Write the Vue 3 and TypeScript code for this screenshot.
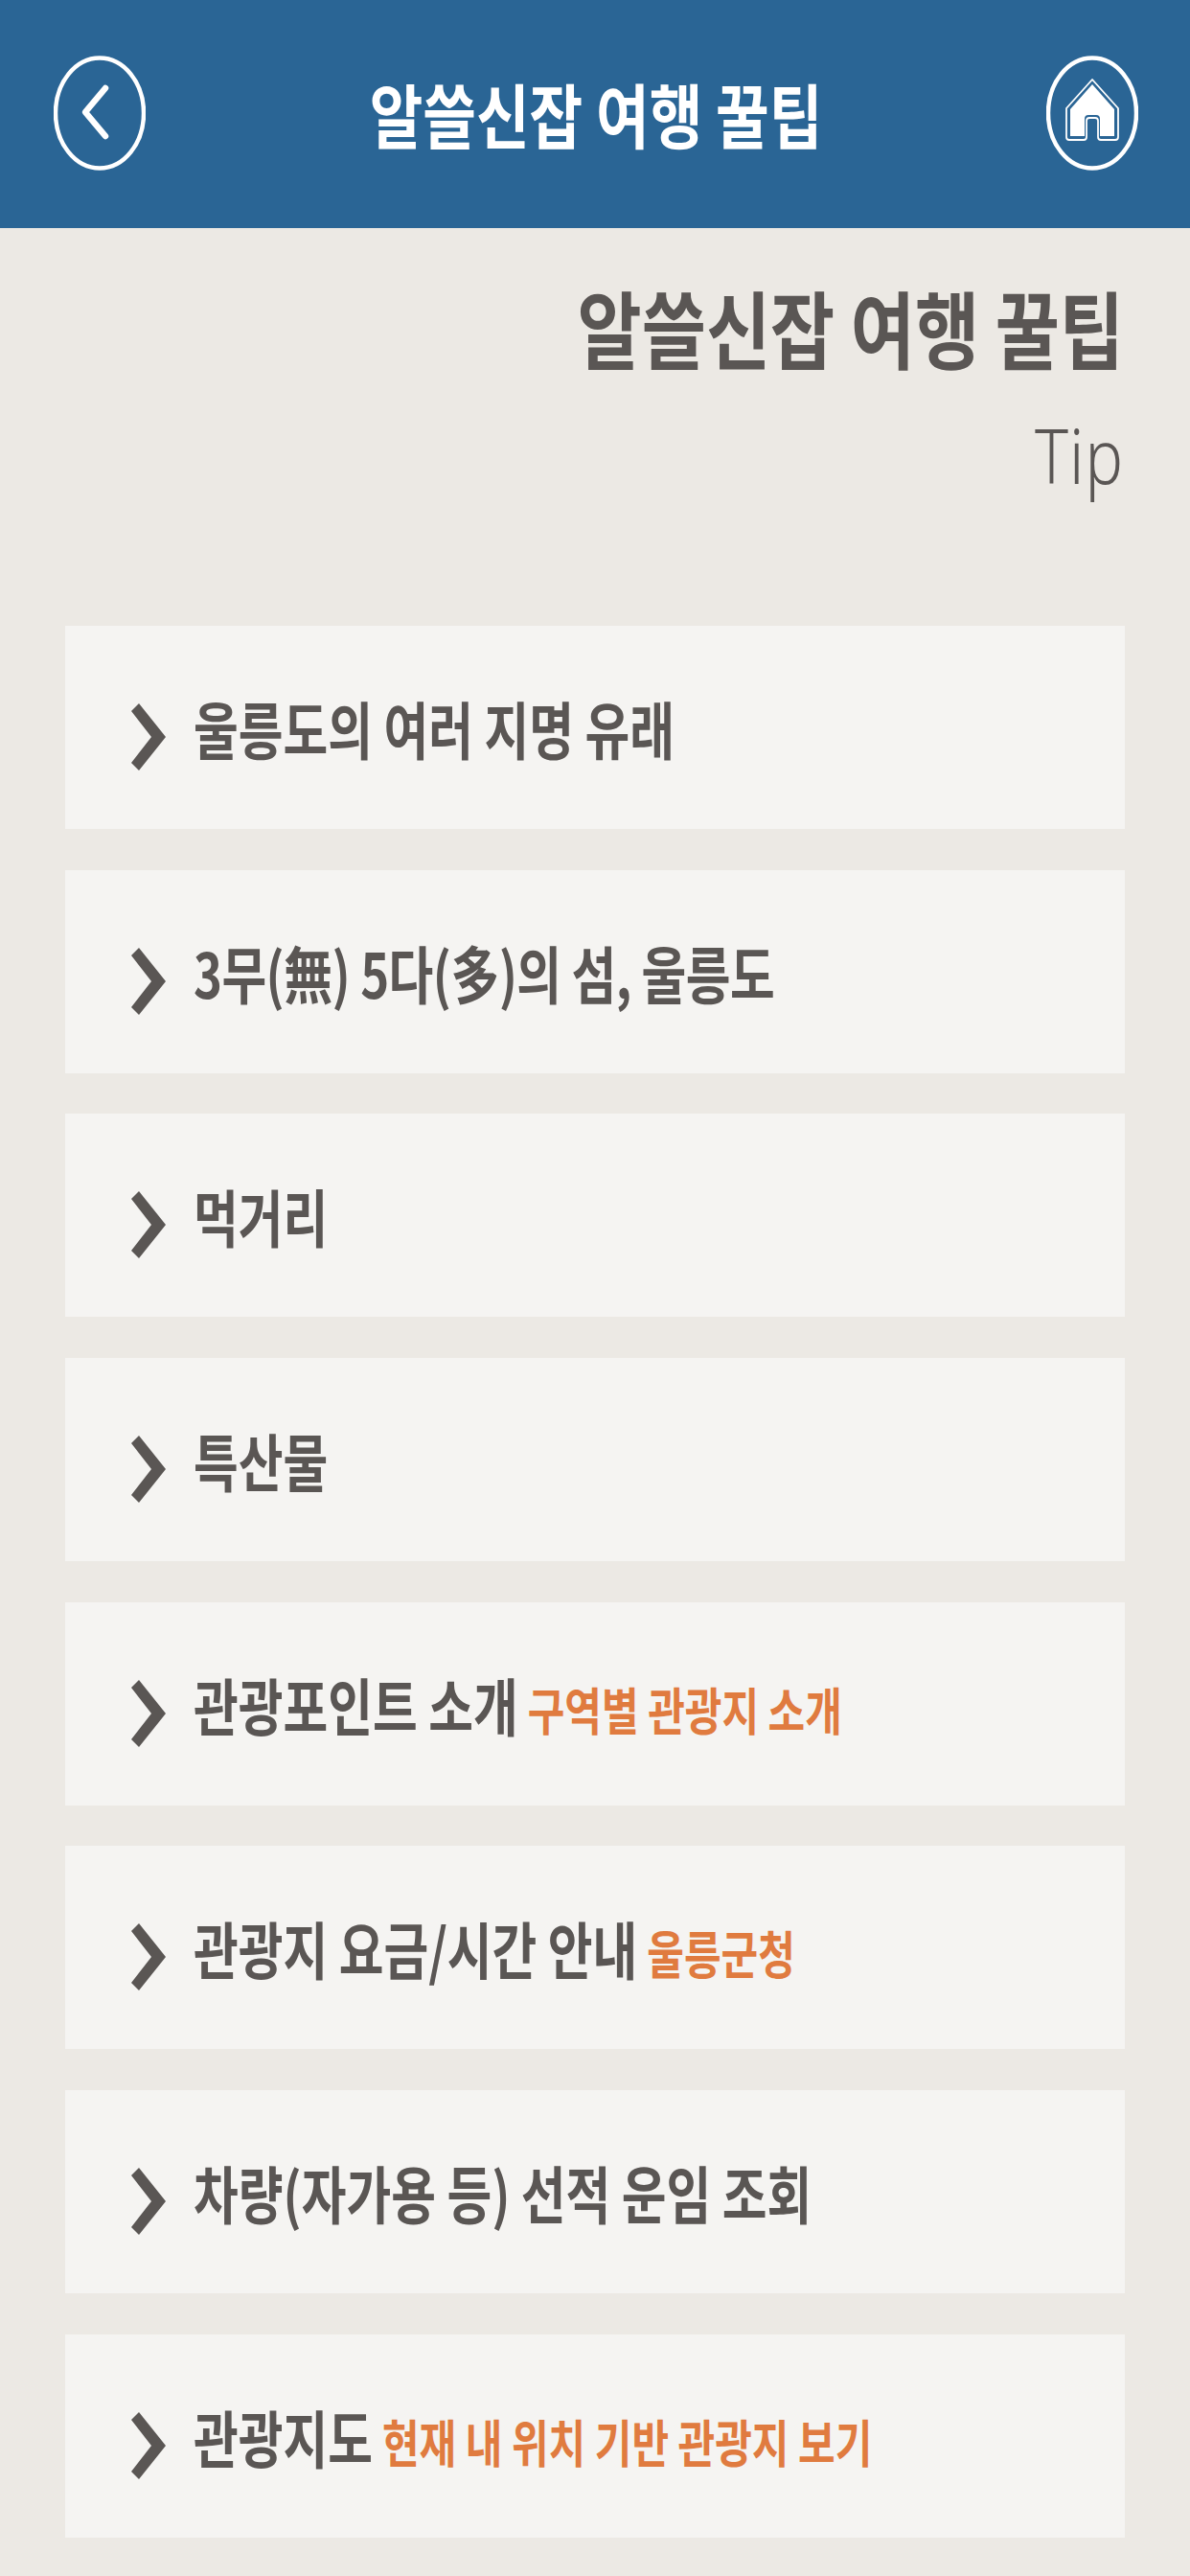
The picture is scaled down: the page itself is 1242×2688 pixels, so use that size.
<script setup lang="ts">
interface Item { label: string; note?: string; tight?: boolean }
const items: Item[] = [
  { label: '울릉도의 여러 지명 유래' },
  { label: '3무(無) 5다(多)의 섬, 울릉도', tight: true },
  { label: '먹거리' },
  { label: '특산물' },
  { label: '관광포인트 소개', note: '구역별 관광지 소개' },
  { label: '관광지 요금/시간 안내', note: '울릉군청' },
  { label: '차량(자가용 등) 선적 운임 조회' },
  { label: '관광지도', note: '현재 내 위치 기반 관광지 보기' },
]
</script>

<template>
  <div class="page">
    <header class="bar">
      <svg class="round" viewBox="0 0 96 120" aria-label="뒤로">
        <ellipse cx="48" cy="60" rx="46" ry="57.5" fill="none" stroke="#fff" stroke-width="4.5" />
        <path d="M54 34 L33 59 L54 84" fill="none" stroke="#fff" stroke-width="6.5" stroke-linecap="round" stroke-linejoin="round" />
      </svg>
      <h1 class="bar-title">알쓸신잡 여행 꿀팁</h1>
      <svg class="round" viewBox="0 0 96 120" aria-label="홈">
        <ellipse cx="48" cy="60" rx="46" ry="57.5" fill="none" stroke="#fff" stroke-width="4.5" />
        <path d="M48 30 L71 56 V84 H56 V66 Q56 62 52 62 H44 Q40 62 40 66 V84 H25 V56 Z" fill="#fff" />
        <path d="M48 25 L75 55 V85 Q75 88 72 88 H57 Q54 88 54 85 V68 Q54 65 51 65 H45 Q42 65 42 68 V85 Q42 88 39 88 H24 Q21 88 21 85 V55 Z" fill="none" stroke="#fff" stroke-width="1.8" stroke-linejoin="round" />
      </svg>
    </header>

    <section class="heading">
      <h2 class="heading-main">알쓸신잡 여행 꿀팁</h2>
      <p class="heading-sub">Tip</p>
    </section>

    <ul class="list">
      <li v-for="item in items" :key="item.label" class="row">
        <svg class="chev" viewBox="0 0 36 70" aria-hidden="true">
          <path d="M8 0 L36 35 L8 70 L0 62 L21 35 L0 8 Z" fill="#5a5654" />
        </svg>
        <span class="text">
          <span class="label" :class="{ tight: item.tight }">{{ item.label }}</span>
          <span v-if="item.note" class="note">{{ item.note }}</span>
        </span>
      </li>
    </ul>
  </div>
</template>

<style>
html, body { margin: 0; background: #ece9e4; }
</style>

<style scoped>
.page {
  width: 1242px;
  height: 2688px;
  background: #ece9e4;
  font-family: "Noto Sans CJK KR", "Noto Sans", sans-serif;
  overflow: hidden;
}
.bar {
  height: 238px;
  box-sizing: border-box;
  padding: 58px 54px 0 56px;
  background: #2a6595;
  display: flex;
  justify-content: space-between;
  align-items: flex-start;
}
.round { width: 96px; height: 120px; display: block; }
.bar-title {
  margin: 0;
  color: #fff;
  font-size: 60.5px;
  line-height: 120px;
  font-weight: 700;
  transform: scaleY(1.2);
}
.heading {
  height: 415px;
  box-sizing: border-box;
  padding: 47px 69px 0 0;
  text-align: right;
  color: #5a5654;
}
.heading-main {
  margin: 0;
  font-size: 73px;
  line-height: 110px;
  font-weight: 700;
  transform: scaleY(1.2);
}
.heading-sub {
  margin: 34px 0 0;
  font-family: "Noto Sans", sans-serif;
  font-weight: 300;
  font-size: 66px;
  letter-spacing: 1px;
  line-height: 90px;
  transform: scaleY(1.2);
  transform-origin: right center;
}
.list {
  list-style: none;
  margin: 0 0 0 68px;
  padding: 0;
  width: 1106px;
  display: flex;
  flex-direction: column;
  gap: 42.7px;
}
.row {
  height: 212px;
  background: #f5f4f2;
  display: flex;
  align-items: center;
  padding-left: 69px;
  box-sizing: border-box;
}
.chev { width: 36px; height: 70px; margin: 20px 29px 0 0; flex: none; }
.text {
  display: inline-block;
  color: #5a5654;
  transform: scaleY(1.27);
  white-space: nowrap;
}
.label { font-size: 50.8px; font-weight: 700; }
.label.tight { letter-spacing: -0.55px; }
.note { font-size: 42px; font-weight: 700; color: #e07b3f; margin-left: 10px; }
</style>
